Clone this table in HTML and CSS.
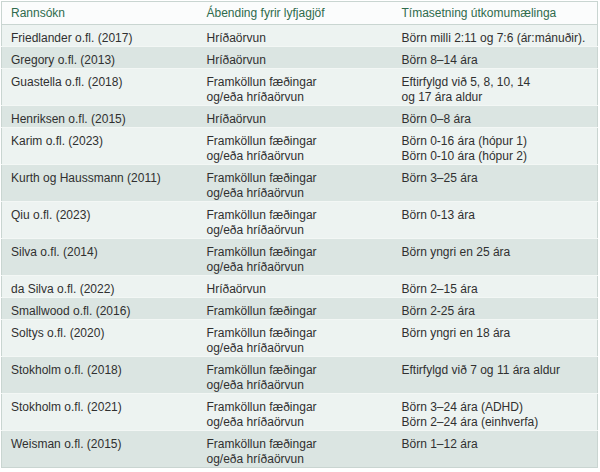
FILE: index.html
```html
<!DOCTYPE html>
<html lang="is">
<head>
<meta charset="utf-8">
<link rel="stylesheet" href="styles.css">
</head>
<body>
<table class="studies">
  <colgroup>
    <col class="c1"><col class="c2"><col class="c3">
  </colgroup>
  <thead>
    <tr><th>Rannsókn</th><th>Ábending fyrir lyfjagjöf</th><th>Tímasetning útkomumælinga</th></tr>
  </thead>
  <tbody>
    <tr><td>Friedlander o.fl. (2017)</td><td>Hríðaörvun</td><td>Börn milli 2:11 og 7:6 (ár:mánuðir).</td></tr>
    <tr><td>Gregory o.fl. (2013)</td><td>Hríðaörvun</td><td>Börn 8–14 ára</td></tr>
    <tr><td>Guastella o.fl. (2018)</td><td>Framköllun fæðingar<br>og/eða hríðaörvun</td><td>Eftirfylgd við 5, 8, 10, 14<br>og 17 ára aldur</td></tr>
    <tr><td>Henriksen o.fl. (2015)</td><td>Hríðaörvun</td><td>Börn 0–8 ára</td></tr>
    <tr><td>Karim o.fl. (2023)</td><td>Framköllun fæðingar<br>og/eða hríðaörvun</td><td>Börn 0-16 ára (hópur 1)<br>Börn 0-10 ára (hópur 2)</td></tr>
    <tr><td>Kurth og Haussmann (2011)</td><td>Framköllun fæðingar<br>og/eða hríðaörvun</td><td>Börn 3–25 ára</td></tr>
    <tr><td>Qiu o.fl. (2023)</td><td>Framköllun fæðingar<br>og/eða hríðaörvun</td><td>Börn 0-13 ára</td></tr>
    <tr><td>Silva o.fl. (2014)</td><td>Framköllun fæðingar<br>og/eða hríðaörvun</td><td>Börn yngri en 25 ára</td></tr>
    <tr><td>da Silva o.fl. (2022)</td><td>Hríðaörvun</td><td>Börn 2–15 ára</td></tr>
    <tr><td>Smallwood o.fl. (2016)</td><td>Framköllun fæðingar</td><td>Börn 2-25 ára</td></tr>
    <tr><td>Soltys o.fl. (2020)</td><td>Framköllun fæðingar<br>og/eða hríðaörvun</td><td>Börn yngri en 18 ára</td></tr>
    <tr><td>Stokholm o.fl. (2018)</td><td>Framköllun fæðingar<br>og/eða hríðaörvun</td><td>Eftirfylgd við 7 og 11 ára aldur</td></tr>
    <tr><td>Stokholm o.fl. (2021)</td><td>Framköllun fæðingar<br>og/eða hríðaörvun</td><td>Börn 3–24 ára (ADHD)<br>Börn 2–24 ára (einhverfa)</td></tr>
    <tr><td>Weisman o.fl. (2015)</td><td>Framköllun fæðingar<br>og/eða hríðaörvun</td><td>Börn 1–12 ára</td></tr>
  </tbody>
</table>
</body>
</html>
```
FILE: styles.css
```css
html, body {
  margin: 0;
  padding: 0;
  background: #ffffff;
}
body {
  padding: 1px 0 0 1px;
  font-family: "Liberation Sans", Arial, sans-serif;
  font-size: 12px;
  color: #303030;
}
.studies {
  width: 596px;
  border-collapse: collapse;
  border: 1px solid #c9d5d1;
  table-layout: fixed;
}
.c1 { width: 196px; }
.c2 { width: 195px; }
.c3 { width: 205px; }
.studies th {
  text-align: left;
  font-weight: 400;
  color: #2f6b4c;
  background: #fbfcfc;
  padding: 4px 9px 4px 9px;
  line-height: 14px;
  border-bottom: 1px solid #c9d5d1;
}
.studies td {
  vertical-align: top;
  padding: 6px 9px 0 9px;
  line-height: 15px;
  border-bottom: 1px solid #f3f7f5;
}
.studies tbody tr:nth-child(odd) td { background: #edf3f1; }
.studies tbody tr:nth-child(even) td { background: #dbe5e2; }
.studies tbody tr:last-child td { border-bottom: none; }
```
